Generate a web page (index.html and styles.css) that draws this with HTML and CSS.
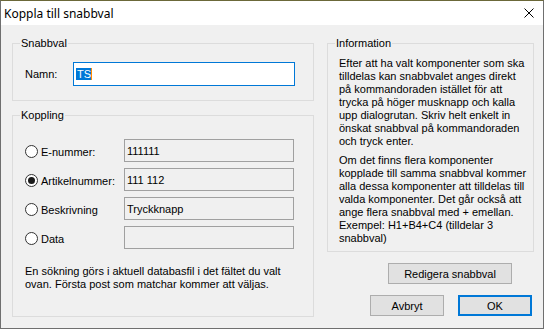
FILE: index.html
```html
<!DOCTYPE html>
<html lang="sv">
<head>
  <meta charset="utf-8">
  <title>Koppla till snabbval</title>
  <link rel="stylesheet" href="styles.css">
</head>
<body>
  <div class="window">
    <div class="titlebar">
      <span class="title">Koppla till snabbval</span>
      <svg class="close" width="10" height="10" viewBox="0 0 10 10">
        <path d="M0.5 0.5 L9.5 9.5 M9.5 0.5 L0.5 9.5" stroke="#000" stroke-width="1" fill="none" />
      </svg>
    </div>

    <div class="content">
      <div class="left">
        <div class="group group-snabbval">
          <span class="legend">Snabbval</span>
          <div class="name-row">
            <label class="name-label">Namn:</label>
            <div class="field field-active"><span class="sel">TS</span><span class="caret"></span></div>
          </div>
        </div>

        <div class="group group-koppling">
          <span class="legend">Koppling</span>
          <div class="rows">
            <div class="row">
              <span class="radio"></span>
              <span class="rlabel">E-nummer:</span>
              <div class="field">111111</div>
            </div>
            <div class="row">
              <span class="radio checked"></span>
              <span class="rlabel">Artikelnummer:</span>
              <div class="field">111 112</div>
            </div>
            <div class="row">
              <span class="radio"></span>
              <span class="rlabel">Beskrivning</span>
              <div class="field">Tryckknapp</div>
            </div>
            <div class="row">
              <span class="radio"></span>
              <span class="rlabel">Data</span>
              <div class="field"></div>
            </div>
          </div>
          <p class="note">En sökning görs i aktuell databasfil i det fältet du valt<br>ovan. Första post som matchar kommer att väljas.</p>
        </div>
      </div>

      <div class="right">
        <div class="group group-info">
          <span class="legend">Information</span>
          <p>Efter att ha valt komponenter som ska<br>tilldelas kan snabbvalet anges direkt<br>på kommandoraden istället för att<br>trycka på höger musknapp och kalla<br>upp dialogrutan. Skriv helt enkelt in<br>önskat snabbval på kommandoraden<br>och tryck enter.</p>
          <p>Om det finns flera komponenter<br>kopplade till samma snabbval kommer<br>alla dessa komponenter att tilldelas till<br>valda komponenter. Det går också att<br>ange flera snabbval med + emellan.<br>Exempel: H1+B4+C4 (tilldelar 3<br>snabbval)</p>
        </div>
        <div class="btn-row edit-row">
          <button class="btn btn-wide">Redigera snabbval</button>
        </div>
        <div class="btn-row action-row">
          <button class="btn">Avbryt</button>
          <button class="btn btn-default">OK</button>
        </div>
      </div>
    </div>
  </div>
</body>
</html>
```

FILE: styles.css
```css
* {
  box-sizing: border-box;
  margin: 0;
  padding: 0;
}
body {
  font-family: "Liberation Sans", Arial, sans-serif;
  font-size: 11px;
  color: #000;
  background: #fff;
}
.window {
  width: 544px;
  height: 329px;
  border: 1px solid #6f6f6f;
  border-top-color: #6b6839;
  display: flex;
  flex-direction: column;
}
.titlebar {
  height: 24px;
  background: #fff;
  display: flex;
  align-items: center;
  justify-content: space-between;
  padding: 0 9px 0 3px;
}
.title {
  font-family: "Noto Sans", "Open Sans", sans-serif;
  font-size: 12px;
}
.close {
  display: block;
}
.content {
  flex: 1;
  background: #f0f0f0;
  display: flex;
  gap: 13px;
  padding: 18px 9px 0 11px;
}
.left {
  width: 302px;
  display: flex;
  flex-direction: column;
  gap: 14px;
}
.right {
  width: 207px;
  display: flex;
  flex-direction: column;
}
.group {
  position: relative;
  border: 1px solid #dcdcdc;
}
.legend {
  position: absolute;
  top: -7px;
  left: 7px;
  padding: 0 1px;
  line-height: 13px;
  background: #f0f0f0;
}
.group-snabbval {
  height: 58px;
  padding: 18px 0 0 12px;
}
.name-row {
  display: flex;
  align-items: center;
}
.name-label {
  width: 48px;
}
.field {
  width: 170px;
  height: 23px;
  border: 1px solid #a0a0a0;
  background: #f0f0f0;
  padding-left: 2px;
  display: flex;
  align-items: center;
}
.field-active {
  width: 222px;
  height: 24px;
  border-color: #0078d7;
  background: #fff;
}
.sel {
  background: #0078d7;
  color: #fff;
  line-height: 12px;
  padding-left: 1px;
}
.caret {
  width: 1px;
  height: 12px;
  background: #ff8c00;
}
.group-koppling {
  height: 202px;
  padding: 23px 0 0 12px;
}
.rows {
  display: flex;
  flex-direction: column;
  gap: 6px;
}
.row {
  display: flex;
  align-items: center;
  height: 23px;
}
.radio {
  width: 13px;
  height: 13px;
  border: 1px solid #333;
  border-radius: 50%;
  background: #fff;
  display: flex;
  align-items: center;
  justify-content: center;
  margin-top: 2px;
}
.radio.checked::after {
  content: "";
  width: 7px;
  height: 7px;
  border-radius: 50%;
  background: #1a1a1a;
}
.rlabel {
  width: 83px;
  margin-left: 3px;
  margin-top: 2px;
}
.note {
  margin-top: 16px;
  line-height: 13px;
}
.group-info {
  height: 209px;
  padding: 13px 0 0 11px;
  line-height: 13px;
  white-space: nowrap;
}
.group-info p + p {
  margin-top: 6px;
}
.btn-row {
  display: flex;
  justify-content: flex-end;
}
.edit-row {
  margin-top: 11px;
  padding-right: 22px;
}
.action-row {
  margin-top: 11px;
  padding-right: 2px;
  gap: 14px;
}
.btn {
  width: 74px;
  height: 21px;
  border: 1px solid #adadad;
  background: #e1e1e1;
  font-family: inherit;
  font-size: 11px;
  color: #000;
}
.btn-wide {
  width: 124px;
}
.btn-default {
  border: 2px solid #0078d7;
}
```
